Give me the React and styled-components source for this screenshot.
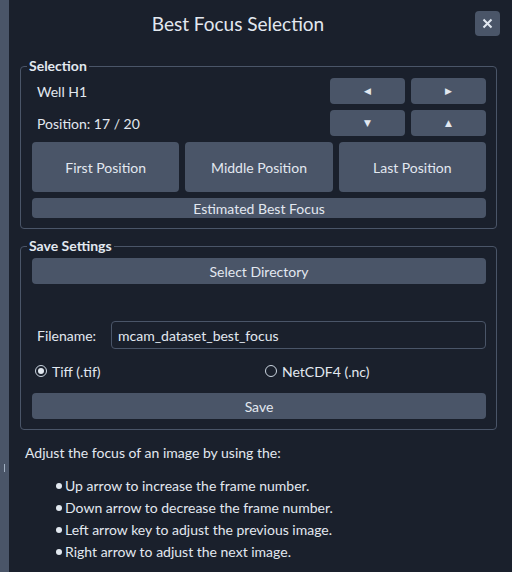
import React from 'react';
import styled, { createGlobalStyle } from 'styled-components';

const GlobalStyle = createGlobalStyle`
    html, body {
        margin: 0;
        padding: 0;
        background: #1a202c;
    }
    body {
        font-family: Lato, "Noto Sans", sans-serif;
        color: #e2e8f0;
    }
`

const Page = styled.div`
    display: flex;
    width: 512px;
    height: 572px;
    overflow: hidden;
`

const Strip = styled.div`
    width: 9px;
    flex-shrink: 0;
    background: #4a5568;
    display: flex;
    align-items: flex-start;
    justify-content: center;
    padding-top: 464px;
    box-sizing: border-box;
`

const Handle = styled.div`
    width: 1px;
    height: 8px;
    background: #a0aec0;
`

const Main = styled.div`
    flex: 1;
    display: flex;
    flex-direction: column;
    padding: 0 15px 0 11px;
`

const Header = styled.div`
    display: flex;
    align-items: center;
    height: 46px;
    margin: 0 -3px 0 -11px;
`

const Title = styled.h1`
    flex: 1;
    margin: 0;
    text-align: center;
    font-size: 19px;
    font-weight: 400;
    color: #e2e8f0;
`

const CloseButton = styled.button`
    width: 25px;
    height: 25px;
    border: none;
    border-radius: 4px;
    background: #4a5568;
    display: flex;
    align-items: center;
    justify-content: center;
    padding: 0;
    margin-left: 8px;
`

const Group = styled.fieldset`
    margin: ${p => p.$top || 0}px 0 0 0;
    padding: 3px 10px 10px 11px;
    border: 1px solid #4a5568;
    border-radius: 4px;
    display: flex;
    flex-direction: column;
    gap: 6px;
`

const Legend = styled.legend`
    margin-left: -5px;
    padding: 0 2px;
    font-size: 14px;
    font-weight: 700;
    line-height: 18px;
    color: #e2e8f0;
`

const Row = styled.div`
    display: flex;
    align-items: center;
    gap: 6px;
    height: ${p => p.$h || 26}px;
`

const Label = styled.span`
    flex: ${p => (p.$grow ? 1 : 'none')};
    padding-left: 5px;
    font-size: 14px;
    color: #e2e8f0;
    width: ${p => (p.$w ? p.$w + 'px' : 'auto')};
`

const Button = styled.button`
    flex: ${p => (p.$w ? 'none' : 1)};
    width: ${p => (p.$w ? p.$w + 'px' : 'auto')};
    height: ${p => p.$h || 26}px;
    border: none;
    border-radius: 4px;
    background: #4a5568;
    color: #e2e8f0;
    font-family: Lato, "Noto Sans", sans-serif;
    font-size: 14px;
    padding: 0;
    display: flex;
    align-items: center;
    justify-content: center;
`

const Arrow = styled.span`
    font-family: "DejaVu Sans", sans-serif;
    font-size: 9px;
    color: #e2e8f0;
`

const Spacer = styled.div`
    height: 25px;
`

const Input = styled.input`
    flex: 1;
    height: 28px;
    box-sizing: border-box;
    border: 1px solid #4a5568;
    border-radius: 4px;
    background: transparent;
    color: #e2e8f0;
    font-family: Lato, "Noto Sans", sans-serif;
    font-size: 14px;
    padding: 0 6px;
    outline: none;
`

const RadioRow = styled.div`
    display: grid;
    grid-template-columns: 1fr 1fr;
    gap: 6px;
    height: 32px;
    align-items: center;
`

const RadioOption = styled.label`
    display: flex;
    align-items: center;
    gap: 5px;
    padding-left: 3px;
    font-size: 14px;
    color: #e2e8f0;
`

const RadioCircle = styled.span`
    width: 10px;
    height: 10px;
    border: 1px solid #cbd5e0;
    border-radius: 50%;
    display: flex;
    align-items: center;
    justify-content: center;

    &::after {
        content: '';
        width: 6px;
        height: 6px;
        border-radius: 50%;
        background: ${p => (p.$checked ? '#e2e8f0' : 'transparent')};
    }
`

const Help = styled.div`
    padding: 13px 0 0 5px;
    font-size: 14px;
`

const HelpText = styled.p`
    margin: 0;
    line-height: 20px;
`

const List = styled.ul`
    list-style: none;
    margin: 12px 0 0 0;
    padding: 0 0 0 31px;
`

const Item = styled.li`
    display: flex;
    align-items: center;
    gap: 3px;
    line-height: 22px;

    &::before {
        content: '';
        width: 6px;
        height: 6px;
        border-radius: 50%;
        background: #e2e8f0;
    }
`

const App = () => {
    return (
        <Page>
            <GlobalStyle />
            <Strip><Handle /></Strip>
            <Main>
                <Header>
                    <Title>Best Focus Selection</Title>
                    <CloseButton>
                        <svg width="11" height="11" viewBox="0 0 11 11">
                            <path d="M1.5 1.5 L9.5 9.5 M9.5 1.5 L1.5 9.5" stroke="#e2e8f0" strokeWidth="2" />
                        </svg>
                    </CloseButton>
                </Header>

                <Group $top={11}>
                    <Legend>Selection</Legend>
                    <Row>
                        <Label $grow>Well H1</Label>
                        <Button $w={75}><Arrow>◀</Arrow></Button>
                        <Button $w={75}><Arrow>▶</Arrow></Button>
                    </Row>
                    <Row>
                        <Label $grow>Position: 17 / 20</Label>
                        <Button $w={75}><Arrow>▼</Arrow></Button>
                        <Button $w={75}><Arrow>▲</Arrow></Button>
                    </Row>
                    <Row $h={50}>
                        <Button $h={50}>First Position</Button>
                        <Button $h={50}>Middle Position</Button>
                        <Button $h={50}>Last Position</Button>
                    </Row>
                    <Row $h={20}>
                        <Button $h={20}>Estimated Best Focus</Button>
                    </Row>
                </Group>

                <Group $top={8}>
                    <Legend>Save Settings</Legend>
                    <Row>
                        <Button>Select Directory</Button>
                    </Row>
                    <Spacer />
                    <Row $h={28}>
                        <Label $w={68}>Filename:</Label>
                        <Input defaultValue="mcam_dataset_best_focus" />
                    </Row>
                    <RadioRow>
                        <RadioOption><RadioCircle $checked />Tiff (.tif)</RadioOption>
                        <RadioOption><RadioCircle />NetCDF4 (.nc)</RadioOption>
                    </RadioRow>
                    <Row>
                        <Button>Save</Button>
                    </Row>
                </Group>

                <Help>
                    <HelpText>Adjust the focus of an image by using the:</HelpText>
                    <List>
                        <Item>Up arrow to increase the frame number.</Item>
                        <Item>Down arrow to decrease the frame number.</Item>
                        <Item>Left arrow key to adjust the previous image.</Item>
                        <Item>Right arrow to adjust the next image.</Item>
                    </List>
                </Help>
            </Main>
        </Page>
    )
}

export default App
